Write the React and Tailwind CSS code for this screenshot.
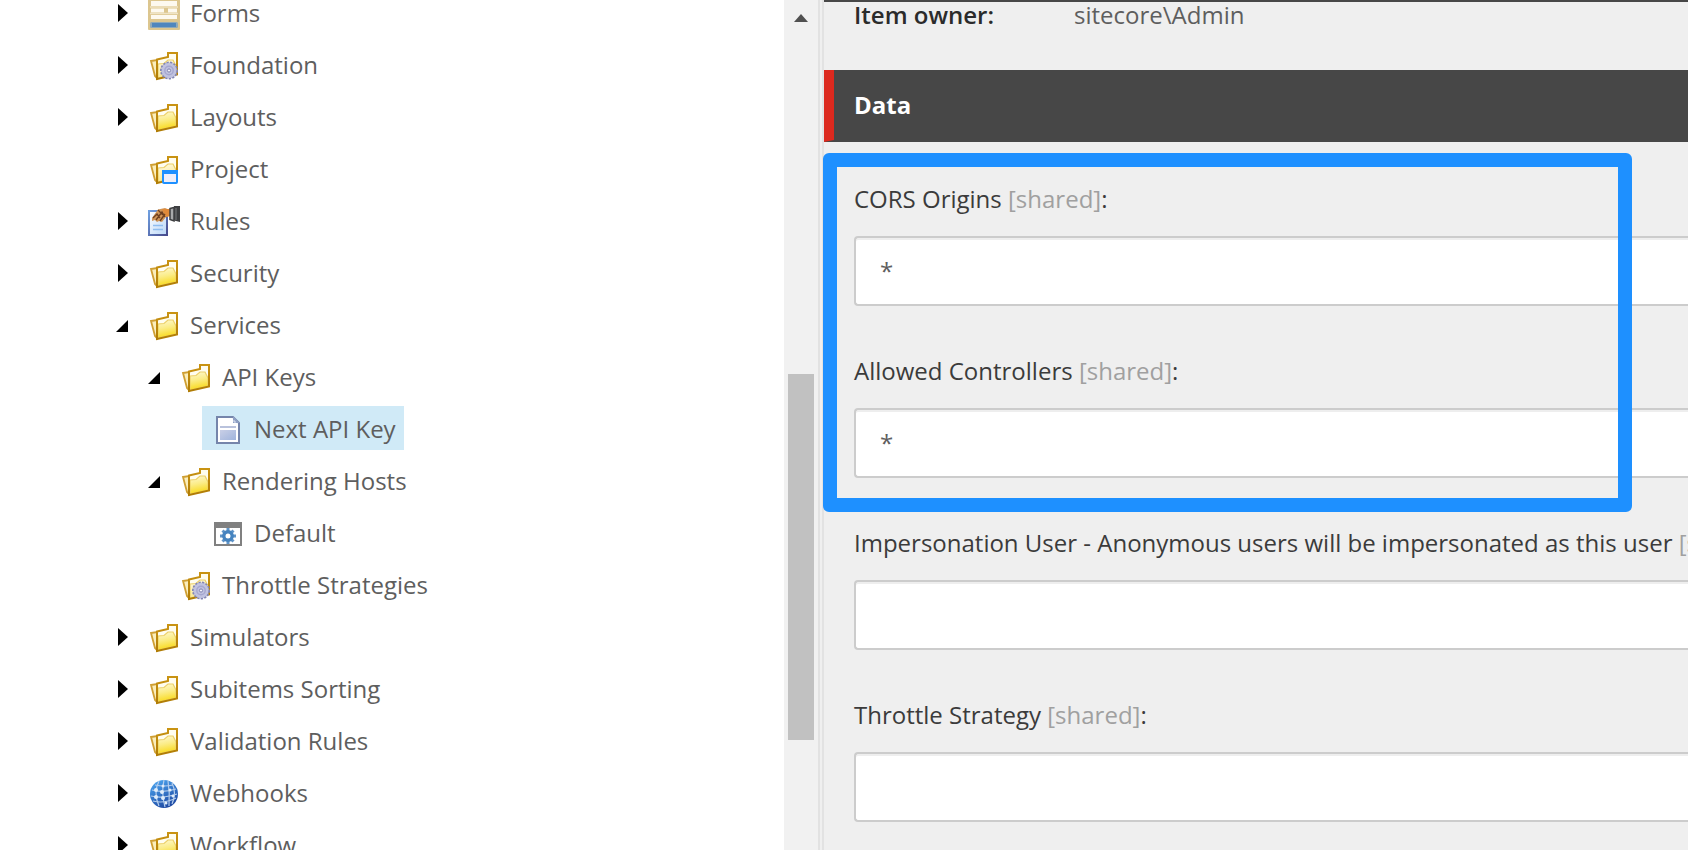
import React, { useState } from 'react';

const FolderBase = ({ children, pale }) => (
  <svg className="h-8 w-8 shrink-0" viewBox="0 0 32 32" aria-hidden="true">
    <defs>
      <linearGradient id="folderFront" x1="0" y1="0" x2="0.2" y2="1">
        <stop offset="0" stopColor="#fff9d4" />
        <stop offset="0.5" stopColor="#fbec86" />
        <stop offset="1" stopColor="#f9da1c" />
      </linearGradient>
      <linearGradient id="folderPale" x1="0" y1="0" x2="0.3" y2="1">
        <stop offset="0" stopColor="#fffbe6" />
        <stop offset="1" stopColor="#f9e68a" />
      </linearGradient>
      <linearGradient id="folderEdge" x1="0" y1="0" x2="0" y2="1">
        <stop offset="0" stopColor="#c99312" />
        <stop offset="1" stopColor="#b07c05" />
      </linearGradient>
    </defs>
    <path d="M3 11 L9 10 V28 L7 26 Z" fill="#fbeebb" stroke="#cf9f33" strokeWidth="1.800" />
    <path d="M9 9.500 L20 7 V3 H29 V24.500 L9 29 Z" fill="#fffdf0" />
    <path
      d="M10 14 L16 13.500 L20 10 H25 L28 16 V24 L10 28 Z"
      fill={pale ? 'url(#folderPale)' : 'url(#folderFront)'}
      stroke="#ecd06a"
      strokeWidth="1.200"
    />
    <path d="M9 9.500 L20 7 V3 H29 V24.500 L9 29 Z" fill="none" stroke="url(#folderEdge)" strokeWidth="2" />
    {children}
  </svg>
);

const FolderIcon = () => <FolderBase />;

const FolderGearIcon = () => (
  <FolderBase pale>
    <circle cx="21" cy="20.500" r="8" fill="#b9bbdc" stroke="#8386b4" strokeWidth="2" strokeDasharray="2.2 1.3" />
    <circle cx="21" cy="20.500" r="7.400" fill="#c0c2e0" />
    <circle cx="21" cy="20.500" r="4.200" fill="none" stroke="#a5a7cf" strokeWidth="1.400" />
    <circle cx="21" cy="20.500" r="1.600" fill="#f4f4fb" stroke="#7f82b0" />
  </FolderBase>
);

const FolderWindowIcon = () => (
  <FolderBase pale>
    <rect x="15" y="17" width="14" height="12" rx="1" fill="#eeeef9" stroke="#1e90ff" strokeWidth="2" />
    <path d="M14 18 H30" stroke="#1e90ff" strokeWidth="4" />
  </FolderBase>
);

const FormsIcon = () => (
  <svg className="h-8 w-8 shrink-0" viewBox="0 0 32 32" aria-hidden="true">
    <rect width="32" height="32" rx="1" fill="#dcc68f" />
    <path d="M3 3 H29 V8 H3 Z M3 10.500 H16 V14.500 H3 Z M20 10.500 H29 V14.500 H20 Z M3 17 H29 V21 H3 Z" fill="#fdf9ef" />
    <path d="M2 9 H30 M2 15.500 H30" stroke="#efe3c4" strokeWidth="1.500" />
    <rect x="2" y="24" width="28" height="6" rx="1.500" fill="#8fa9b8" />
    <rect x="4" y="25" width="24" height="4" fill="#4f86bd" />
  </svg>
);

const RulesIcon = () => (
  <svg className="h-8 w-8 shrink-0" viewBox="0 0 32 32" aria-hidden="true">
    <defs>
      <linearGradient id="rulesPaper" x1="0" y1="0" x2="1" y2="1">
        <stop offset="0" stopColor="#ffffff" />
        <stop offset="1" stopColor="#b9d6f7" />
      </linearGradient>
      <linearGradient id="rulesEdge" x1="0" y1="0" x2="1" y2="1">
        <stop offset="0" stopColor="#6f9fe0" />
        <stop offset="1" stopColor="#474a8c" />
      </linearGradient>
    </defs>
    <rect x="1" y="5" width="18" height="24" fill="url(#rulesPaper)" stroke="url(#rulesEdge)" strokeWidth="2" />
    <path d="M5 19.500 H15 M5 23.500 H15" stroke="#8fbdf0" strokeWidth="1.500" />
    <path d="M4 12 L10 3.500 L17 2 L22 4 V10 L18 11 L14 16 L11 15 L9 16 L7 14 L4 15 Z" fill="#cf9558" />
    <path d="M14 3 L22 3 V10 L18 11 Z" fill="#e08a3a" />
    <path d="M5 12 L9 8 L12 12 M8 14 L14 6 L17 11 M12 15 L17 8 M10 4 L15 9" fill="none" stroke="#6f4020" strokeWidth="1.300" />
    <path d="M22 2.500 L26 1.500 V15 L22 13.500 Z" fill="#a9aaac" stroke="#3d3e40" strokeWidth="1.500" />
    <path d="M26 0 H32 V16 L26 14.500 Z" fill="#3e3f42" />
    <path d="M28 2 V14" stroke="#66686b" strokeWidth="1.500" />
  </svg>
);

const DocumentIcon = () => (
  <svg className="h-8 w-8 shrink-0" viewBox="0 0 32 32" aria-hidden="true">
    <defs>
      <linearGradient id="docBlock" x1="0" y1="0" x2="1" y2="1">
        <stop offset="0" stopColor="#c9cfe6" />
        <stop offset="1" stopColor="#a0b4dc" />
      </linearGradient>
    </defs>
    <path d="M5 3 H21 L27 9 V29 H5 Z" fill="#ffffff" stroke="#7585ab" strokeWidth="2" />
    <path d="M21 2 L28 9 H21 Z" fill="#8fa0c4" />
    <path d="M22 6 V8 H24" fill="none" stroke="#dfe5f2" />
    <rect x="8" y="12" width="16" height="2" fill="#b9c2dc" />
    <rect x="8" y="16" width="16" height="10" fill="url(#docBlock)" />
  </svg>
);

const HostIcon = () => (
  <svg className="h-8 w-8 shrink-0" viewBox="0 0 32 32" aria-hidden="true">
    <rect x="3" y="5" width="26" height="22" fill="#ffffff" stroke="#808080" strokeWidth="2" />
    <rect x="2" y="4" width="28" height="6" fill="#808080" />
    <path d="M16 10 V26 M8 18 H24 M10.500 12.500 L21.500 23.500 M21.500 12.500 L10.500 23.500" stroke="#5f94c8" strokeWidth="3" />
    <circle cx="16" cy="18" r="4.200" fill="#ffffff" stroke="#4583bf" strokeWidth="3.400" />
  </svg>
);

const GlobeIcon = () => (
  <svg className="h-8 w-8 shrink-0" viewBox="0 0 32 32" aria-hidden="true">
    <defs>
      <linearGradient id="globeFill" x1="0.2" y1="0" x2="0.7" y2="1">
        <stop offset="0" stopColor="#4aa3ee" />
        <stop offset="1" stopColor="#1c459f" />
      </linearGradient>
    </defs>
    <circle cx="16" cy="16" r="14" fill="url(#globeFill)" />
    <g fill="none" stroke="#b4cdec" strokeWidth="1.200">
      <path d="M7 7 Q16 9 25 7 M4 12 Q15 15 28 11 M3 18 Q14 21 29 16 M5 23 Q16 26 28 20" />
      <path d="M11 3 Q5 15 11 28 M16 2 Q13 15 17 29 M20 3 Q22 15 21 28 M24 5 Q29 15 24 26" />
    </g>
    <g fill="#dfecfa">
      <circle cx="8" cy="12" r="2" />
      <circle cx="14" cy="14" r="2" />
      <circle cx="8" cy="19" r="2" />
      <circle cx="15" cy="20" r="2" />
      <circle cx="15" cy="8" r="1.500" />
      <circle cx="22" cy="12" r="1.500" />
      <circle cx="25" cy="18" r="1.500" />
      <circle cx="18" cy="25" r="1.500" />
    </g>
  </svg>
);

const treeItems = [
  { name: 'Forms', icon: FormsIcon, level: 0, state: 'closed' },
  { name: 'Foundation', icon: FolderGearIcon, level: 0, state: 'closed' },
  { name: 'Layouts', icon: FolderIcon, level: 0, state: 'closed' },
  { name: 'Project', icon: FolderWindowIcon, level: 0 },
  { name: 'Rules', icon: RulesIcon, level: 0, state: 'closed' },
  { name: 'Security', icon: FolderIcon, level: 0, state: 'closed' },
  { name: 'Services', icon: FolderIcon, level: 0, state: 'open' },
  { name: 'API Keys', icon: FolderIcon, level: 1, state: 'open' },
  { name: 'Next API Key', icon: DocumentIcon, level: 2 },
  { name: 'Rendering Hosts', icon: FolderIcon, level: 1, state: 'open' },
  { name: 'Default', icon: HostIcon, level: 2 },
  { name: 'Throttle Strategies', icon: FolderGearIcon, level: 1 },
  { name: 'Simulators', icon: FolderIcon, level: 0, state: 'closed' },
  { name: 'Subitems Sorting', icon: FolderIcon, level: 0, state: 'closed' },
  { name: 'Validation Rules', icon: FolderIcon, level: 0, state: 'closed' },
  { name: 'Webhooks', icon: GlobeIcon, level: 0, state: 'closed' },
  { name: 'Workflow', icon: FolderIcon, level: 0, state: 'closed' },
];

const indents = ['pl-[116px]', 'pl-[148px]', 'pl-[180px]'];

const Expander = ({ name, state }) => {
  if (!state) return <span className="w-3 shrink-0" />;
  return (
    <button type="button" aria-label={`Toggle ${name}`} className="w-3 shrink-0">
      <svg className="h-5 w-3" viewBox="0 0 12 20" aria-hidden="true">
        <path d={state === 'open' ? 'M12 6 V18 H0 Z' : 'M2 2 L12 11 L2 20 Z'} fill="#000000" />
      </svg>
    </button>
  );
};

const ContentTree = () => {
  const [selected, setSelected] = useState('Next API Key');

  return (
    <nav aria-label="Content tree" className="min-w-0 flex-1 overflow-hidden bg-white">
      <ul className="-mt-3.5">
        {treeItems.map(({ name, icon: Icon, level, state }) => (
          <li key={name} className={`flex h-13 items-center gap-2.5 ${indents[level]}`}>
            <Expander name={name} state={state} />
            <a
              href="#"
              onClick={(e) => {
                e.preventDefault();
                setSelected(name);
              }}
              className={`flex h-11 items-center gap-2.5 pt-1 pr-2 pl-2.5 leading-9 whitespace-nowrap text-[#5e5e5e] ${
                selected === name ? 'bg-[#d0eaf7]' : ''
              }`}
            >
              <Icon />
              <span className="pb-0.5">{name}</span>
            </a>
          </li>
        ))}
      </ul>
    </nav>
  );
};

const ScrollBar = () => (
  <div className="flex w-[34px] shrink-0 flex-col items-center bg-[#f1f1f1]">
    <button type="button" aria-label="Scroll up" className="flex h-9 w-full items-center justify-center">
      <svg className="h-2 w-3.5" viewBox="0 0 14 8" aria-hidden="true">
        <path d="M7 0 L14 8 H0 Z" fill="#505050" />
      </svg>
    </button>
    <div className="mt-[338px] h-[366px] w-[26px] bg-[#c1c1c1]" />
  </div>
);

const Field = ({ id, label, initial = '' }) => {
  const [value, setValue] = useState(initial);

  return (
    <div className="pb-[42px]">
      <label htmlFor={id} className="block pb-3.5 whitespace-nowrap text-[#3b3b3b]">
        {label} <span className="text-[#a0a0a0]">[shared]</span>:
      </label>
      <input
        id={id}
        type="text"
        value={value}
        onChange={(e) => setValue(e.target.value)}
        className="block h-[70px] w-full rounded-l-sm border-2 border-r-0 border-[#cccccc] bg-white px-6 pb-0.5 text-[#5e5e5e] shadow-[inset_0_2px_0_#eeeeee] outline-none"
      />
    </div>
  );
};

const App = () => {
  return (
    <div className="flex h-screen overflow-hidden bg-[#efefef] font-['Open_Sans','Noto_Sans',sans-serif] text-[24px] leading-[46px]">
      <div className="flex w-[818px] shrink-0">
        <ContentTree />
        <ScrollBar />
      </div>
      <div className="w-1.5 shrink-0 border-x-2 border-[#e2e2e2]" />
      <main className="min-w-0 flex-1 border-t-2 border-[#474747]">
        <dl className="-mt-2.5 flex h-[78px] pl-[30px]">
          <dt className="w-[220px] shrink-0 font-semibold text-[#2b2b2b]">Item owner:</dt>
          <dd className="text-[#5e5e5e]">sitecore\Admin</dd>
        </dl>
        <h2 className="flex h-[72px] items-center border-b-2 border-l-10 border-b-[#474747] border-l-[#dc291e] bg-[#474747] pl-5 font-bold text-white">
          Data
        </h2>
        <form className="relative pt-[34px] pl-[30px]" onSubmit={(e) => e.preventDefault()}>
          <Field id="cors" label="CORS Origins" initial="*" />
          <Field id="controllers" label="Allowed Controllers" initial="*" />
          <Field id="impersonation" label="Impersonation User - Anonymous users will be impersonated as this user" />
          <Field id="throttle" label="Throttle Strategy" />
          <div className="pointer-events-none absolute top-[11px] right-14 -left-px h-[359px] rounded-md border-14 border-[#1e90ff]" />
        </form>
      </main>
    </div>
  );
};

export default App;
